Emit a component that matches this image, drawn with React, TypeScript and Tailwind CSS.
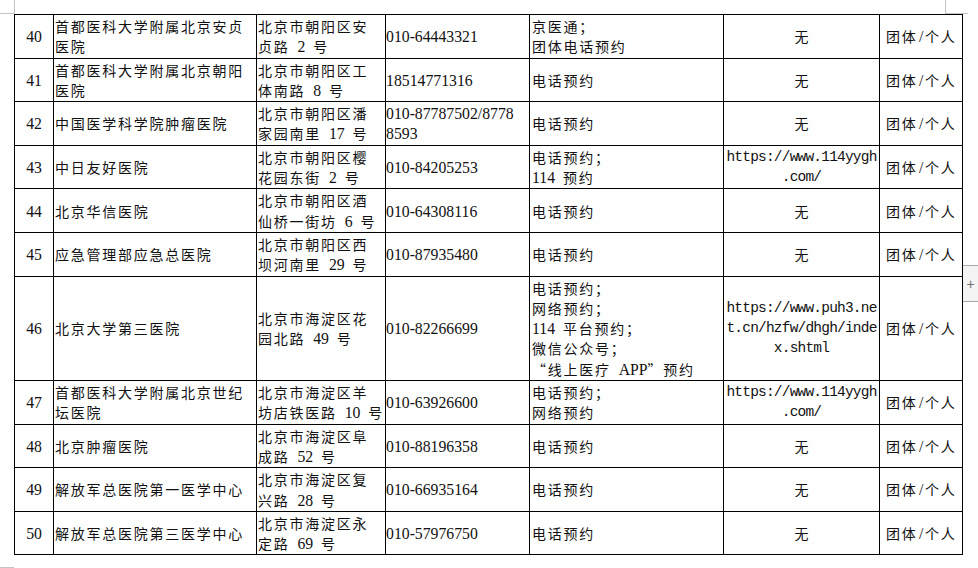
import React from "react";

type Row = {
  n: string;
  name: string[];
  addr: string[];
  phone: string[];
  way: string[];
  url: string[] | null;
};

const rows: Row[] = [
  { n: "40", name: ["首都医科大学附属北京安贞", "医院"], addr: ["北京市朝阳区安", "贞路 2 号"], phone: ["010-64443321"], way: ["京医通；", "团体电话预约"], url: null },
  { n: "41", name: ["首都医科大学附属北京朝阳", "医院"], addr: ["北京市朝阳区工", "体南路 8 号"], phone: ["18514771316"], way: ["电话预约"], url: null },
  { n: "42", name: ["中国医学科学院肿瘤医院"], addr: ["北京市朝阳区潘", "家园南里 17 号"], phone: ["010-87787502/8778", "8593"], way: ["电话预约"], url: null },
  { n: "43", name: ["中日友好医院"], addr: ["北京市朝阳区樱", "花园东街 2 号"], phone: ["010-84205253"], way: ["电话预约；", "114 预约"], url: ["https://www.114yygh", ".com/"] },
  { n: "44", name: ["北京华信医院"], addr: ["北京市朝阳区酒", "仙桥一街坊 6 号"], phone: ["010-64308116"], way: ["电话预约"], url: null },
  { n: "45", name: ["应急管理部应急总医院"], addr: ["北京市朝阳区西", "坝河南里 29 号"], phone: ["010-87935480"], way: ["电话预约"], url: null },
  { n: "46", name: ["北京大学第三医院"], addr: ["北京市海淀区花", "园北路 49 号"], phone: ["010-82266699"], way: ["电话预约；", "网络预约；", "114 平台预约；", "微信公众号；", "“线上医疗 APP”预约"], url: ["https://www.puh3.ne", "t.cn/hzfw/dhgh/inde", "x.shtml"] },
  { n: "47", name: ["首都医科大学附属北京世纪", "坛医院"], addr: ["北京市海淀区羊", "坊店铁医路 10 号"], phone: ["010-63926600"], way: ["电话预约；", "网络预约"], url: ["https://www.114yygh", ".com/"] },
  { n: "48", name: ["北京肿瘤医院"], addr: ["北京市海淀区阜", "成路 52 号"], phone: ["010-88196358"], way: ["电话预约"], url: null },
  { n: "49", name: ["解放军总医院第一医学中心"], addr: ["北京市海淀区复", "兴路 28 号"], phone: ["010-66935164"], way: ["电话预约"], url: null },
  { n: "50", name: ["解放军总医院第三医学中心"], addr: ["北京市海淀区永", "定路 69 号"], phone: ["010-57976750"], way: ["电话预约"], url: null },
];

// Latin runs are set in a serif at a half-width size; CJK runs keep the wider grid spacing.
function Txt({ s }: { s: string }) {
  const parts = s.replace(/ /g, "\u2002").split(/([A-Za-z0-9\-\/.:\u2002]+)/);
  return (
    <>
      {parts.map((p, i) =>
        i % 2 === 1 ? (
          <span key={i} className="text-[15.75px] tracking-normal leading-none font-['Liberation_Serif',serif]">
            {p}
          </span>
        ) : (
          <React.Fragment key={i}>{p}</React.Fragment>
        )
      )}
    </>
  );
}

function Lines({ lines }: { lines: string[] }) {
  return (
    <>
      {lines.map((l, i) => (
        <div key={i}>
          <Txt s={l} />
        </div>
      ))}
    </>
  );
}

const td = "border border-black align-middle py-[1px] whitespace-nowrap";

export default function App() {
  return (
    <div className="relative w-[978px] h-[568px] overflow-hidden bg-white">
      {/* page corner marks */}
      <div className="absolute left-[14px] top-0 w-px h-[14px] bg-[#c4c4c4]" />
      <div className="absolute left-0 top-[13px] w-[14px] h-px bg-[#c4c4c4]" />
      <div className="absolute left-[945px] top-0 w-px h-[14px] bg-[#c4c4c4]" />
      <div className="absolute left-[945px] top-[13px] w-[23px] h-px bg-[#c4c4c4]" />
      <div className="absolute left-0 top-[567px] w-[14px] h-px bg-[#c4c4c4]" />

      {/* add-row handle */}
      <div className="absolute left-[963px] top-[265px] w-[15px] h-[37px] border-y border-[#a9a9a9] bg-[#f4f4f4] flex items-center justify-center text-[#707070] text-[14px] leading-none font-['Liberation_Sans',sans-serif]">
        +
      </div>

      <div className="pt-[14px] pl-[14px]">
        <table className="table-fixed border-collapse w-[948px] text-[#111] text-[14px] tracking-[1.75px] leading-[20.3px] font-['Noto_Sans_CJK_SC',sans-serif]">
          <colgroup>
            <col className="w-[39px]" />
            <col className="w-[203px]" />
            <col className="w-[129px]" />
            <col className="w-[144px]" />
            <col className="w-[194px]" />
            <col className="w-[156px]" />
            <col className="w-[83px]" />
          </colgroup>
          <tbody>
            {rows.map((r) => (
              <tr key={r.n}>
                <td className={td + " text-center"}>
                  <Txt s={r.n} />
                </td>
                <td className={td + " pl-[1px]"}>
                  <Lines lines={r.name} />
                </td>
                <td className={td + " pl-[1px]"}>
                  <Lines lines={r.addr} />
                </td>
                <td className={td + " pl-0"}>
                  <Lines lines={r.phone} />
                </td>
                <td className={td + " pl-[2px]"}>
                  <Lines lines={r.way} />
                </td>
                <td className={td + " text-center"}>
                  {r.url ? (
                    <div className="font-['Liberation_Mono',monospace] text-[14.5px] tracking-[-0.8px] text-[#111]">
                      {r.url.map((u, i) => (
                        <div key={i}>{u}</div>
                      ))}
                    </div>
                  ) : (
                    <span className="pl-[1.75px]">无</span>
                  )}
                </td>
                <td className={td + " pl-[6px]"}>
                  团体<span className="text-[15.75px] tracking-normal leading-none font-['Liberation_Serif',serif] px-[1.6px]">/</span>个人
                </td>
              </tr>
            ))}
          </tbody>
        </table>
      </div>
    </div>
  );
}
